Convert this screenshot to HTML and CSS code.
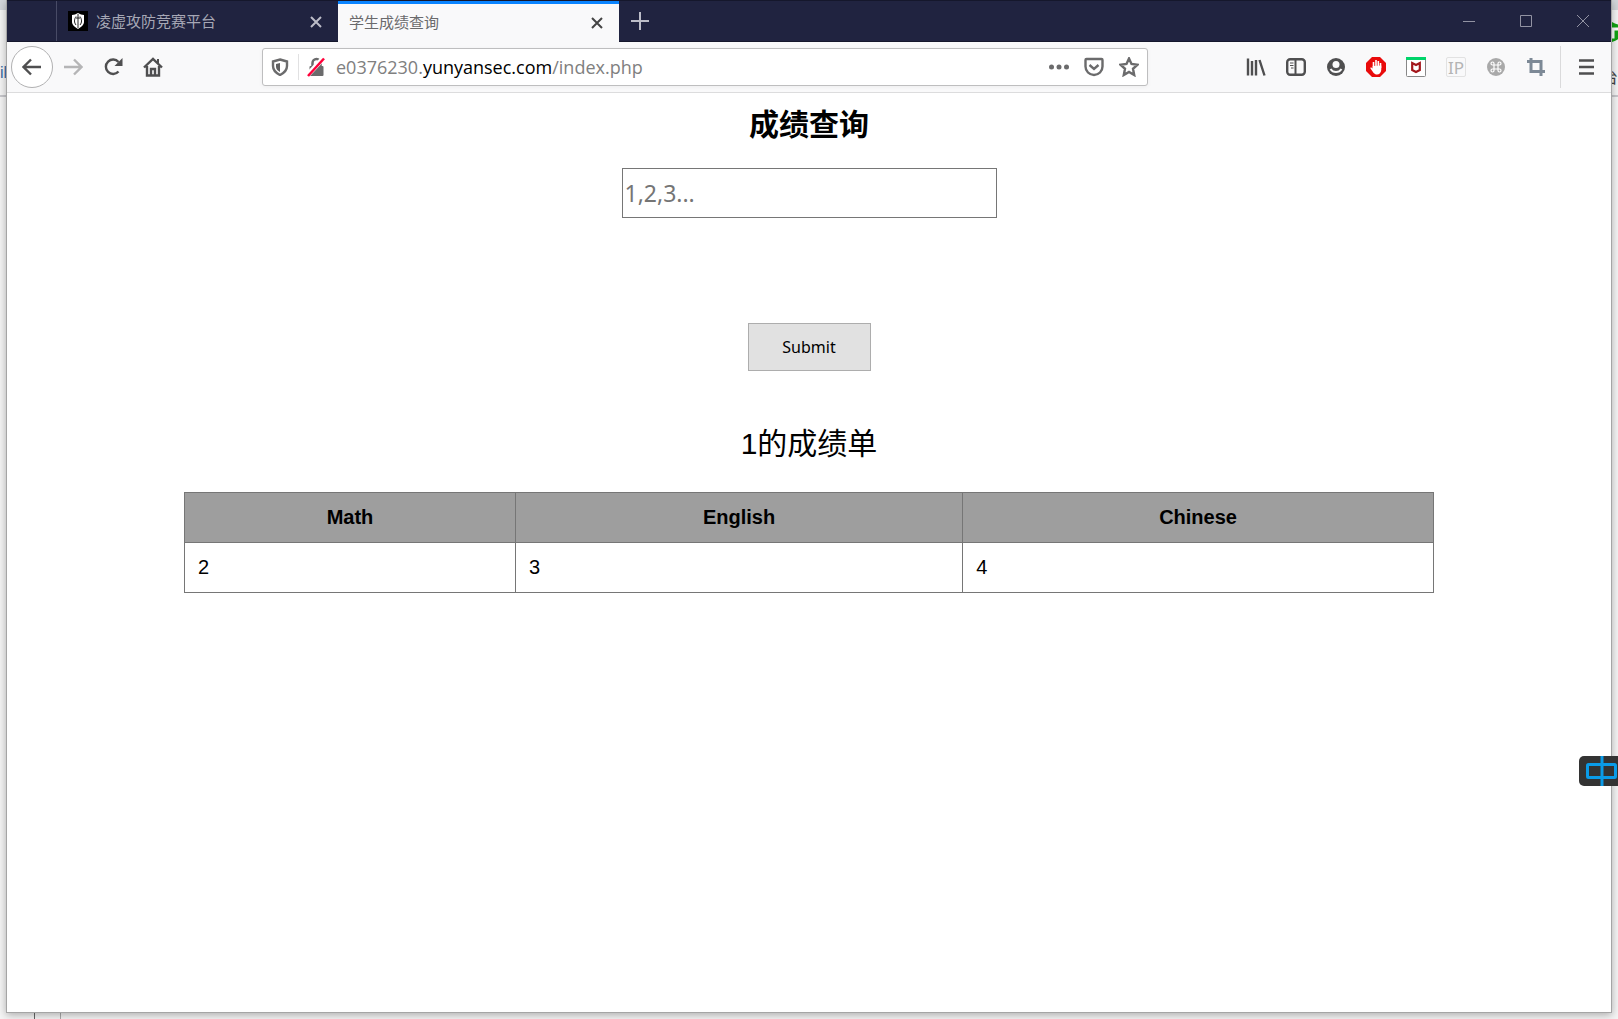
FILE: index.html
```html
<!DOCTYPE html>
<html lang="zh-CN">
<head>
  <meta charset="UTF-8">
  <meta name="viewport" content="width=device-width, initial-scale=1.0">
  <title>学生成绩查询</title>
  <link rel="stylesheet" href="styles.css">
</head>
<body>

<!-- window lying behind the browser, only its edges show -->
<div class="backdrop">
  <div class="back-tabs"></div>
  <div class="back-bar">
    <span class="back-left">il</span>
    <span class="back-right">台</span>
  </div>
  <svg class="back-shield" viewBox="0 0 20 20"><path d="M10 0C7 2 4 3 0 3v8c0 4 4 7 10 9 6-2 10-5 10-9V3c-4 0-7-1-10-3z" fill="#12a312"/><path d="M5 7h11M11 7v8H8" fill="none" stroke="#fff" stroke-width="3"/></svg>
  <div class="back-foot"></div>
</div>

<div class="window">
  <header class="titlebar">
    <div class="tab">
      <svg class="favicon" viewBox="0 0 20 20"><path d="M0 0h20v20H0z" fill="#000"/><path d="M10 2c2 1 4 2 6 2v7c0 3-3 5-6 7-3-2-6-4-6-7V4c2 0 4-1 6-2z" fill="#fff"/><path d="M10 3v14M8 5.500c-2 3-2 6 0 8.500M12 5.500c2 3 2 6 0 8.500M8 7h4" fill="none" stroke="#222" stroke-width="1"/></svg>
      <span class="tab-title">凌虚攻防竞赛平台</span>
      <button class="tab-close" aria-label="关闭"><svg viewBox="0 0 14 14"><path d="M2 2l10 10M12 2L2 12"/></svg></button>
    </div>
    <div class="tab active">
      <span class="tab-title">学生成绩查询</span>
      <button class="tab-close" aria-label="关闭"><svg viewBox="0 0 14 14"><path d="M2 2l10 10M12 2L2 12"/></svg></button>
    </div>
    <button class="new-tab" aria-label="新标签页"><svg viewBox="0 0 18 18"><path d="M9 0v18M0 9h18"/></svg></button>
    <div class="controls">
      <button aria-label="最小化"><svg viewBox="0 0 14 14"><path d="M1 7.500h12"/></svg></button>
      <button aria-label="最大化"><svg viewBox="0 0 14 14"><path d="M1.500 1.500h11v11h-11z"/></svg></button>
      <button aria-label="关闭窗口"><svg viewBox="0 0 14 14"><path d="M1 1l12 12M13 1L1 13"/></svg></button>
    </div>
  </header>

  <nav class="toolbar">
    <button class="back" aria-label="后退"><svg viewBox="0 0 20 20"><path d="M19 10H2M9 2.500L1.500 10 9 17.500"/></svg></button>
    <button class="forward" aria-label="前进"><svg viewBox="0 0 20 20"><path d="M1 10h17M11 2.500l7.500 7.500-7.500 7.500"/></svg></button>
    <button aria-label="刷新"><svg viewBox="0 0 20 20"><path d="M15.500 14.500A7.200 7.200 0 1 1 15.500 5"/><path d="M19.500 1v8h-8z" fill="#4f4f50" stroke="none"/></svg></button>
    <button aria-label="主页"><svg viewBox="0 0 20 20"><path d="M1 10.500l9-8.500 9 8.500M4 9v9.500h12V9"/><path d="M8 18v-6h4v6"/><path d="M14 2h2v4h-2z" stroke="none" fill="#4f4f50"/></svg></button>

    <div class="urlbar">
      <svg class="shield" viewBox="0 0 18 18"><path d="M9 1.500l7 2V8c0 4-3 7-7 9-4-2-7-5-7-9V3.500z"/><path d="M9 5l-4 1v3c0 2 2 4 4 5z" fill="#5f5f60" stroke="none"/></svg>
      <svg class="lock" viewBox="0 0 20 20"><path d="M6 9V6a4 4 0 0 1 8 0v3" fill="none" stroke="#6b6b6c" stroke-width="2.500"/><rect x="3" y="9" width="14" height="10" rx="1" fill="#6b6b6c" stroke="none"/><path d="M1 18L17 1" stroke="#fff" stroke-width="5"/><path d="M1.500 19L17.500 1.500" stroke="#ff0039" stroke-width="2.500"/></svg>
      <a class="url" href="#">e0376230.<b>yunyansec.com</b>/index.php</a>
      <button aria-label="页面操作"><svg viewBox="0 0 20 20"><g fill="#6b6b6c" stroke="none"><circle cx="2.500" cy="10" r="2.500"/><circle cx="10" cy="10" r="2.500"/><circle cx="17.500" cy="10" r="2.500"/></g></svg></button>
      <button aria-label="Pocket"><svg viewBox="0 0 20 20"><path d="M2.500 2h15q1 0 1 1v6.500a8.500 8.500 0 0 1-17 0V3q0-1 1-1z"/><path d="M5.500 8l4.500 4 4.500-4"/></svg></button>
      <button aria-label="书签"><svg viewBox="0 0 20 20"><path d="M10 1.500l2.500 5.500 6 .7-4.500 4.100 1.200 6.200L10 15l-5.200 3L6 11.800 1.500 7.700l6-.7z"/></svg></button>
    </div>

    <button aria-label="书库"><svg viewBox="0 0 20 20"><path d="M2 1.500v17M6 4v14.500M10 3v15.500M13.500 3l5 15.500"/></svg></button>
    <button aria-label="侧栏"><svg viewBox="0 0 20 20"><rect x="1.200" y="2.200" width="17.600" height="15.600" rx="3"/><path d="M9.500 2v16" stroke-width="2"/><path d="M4 6h3.500M4 8.500h3.500M5 11h2.500" stroke-width="1"/></svg></button>
    <button aria-label="账户"><svg viewBox="0 0 20 20"><circle cx="10" cy="10" r="9" fill="#4f4f50" stroke="none"/><circle cx="10" cy="7.500" r="3.500" fill="#f9f9fa" stroke="none"/><path d="M4.500 12a6.500 6.500 0 0 0 11 0" stroke="#f9f9fa" stroke-width="2"/></svg></button>
    <button aria-label="广告拦截"><svg viewBox="0 0 20 20"><path d="M6 0h8l6 6v8l-6 6H6l-6-6V6z" fill="#e90b0b" stroke="none"/><path d="M7.500 11V5M10 10V3M12.300 10V4M14.500 11V6" stroke="#fff" stroke-width="1.600"/><path d="M6.700 9l8.600-.5v4c0 3-2 5-4.300 5S7.500 16 4.500 11.500c-.5-1 .8-1.500 2.200 0z" fill="#fff" stroke="none"/></svg></button>
    <button aria-label="McAfee"><svg viewBox="0 0 20 20"><rect x=".5" y=".5" width="19" height="19" rx="1" fill="#fff" stroke="#888" stroke-width="1"/><path d="M0 0h20v3H0z" fill="#00d46a" stroke="none"/><path d="M6.200 6v7l3.800 2 3.800-2V6L10 8z" stroke="#a3151a" stroke-width="2.200"/></svg></button>
    <button class="ip" aria-label="IP">IP</button>
    <button aria-label="命令"><svg viewBox="0 0 20 20"><circle cx="10" cy="10" r="9" fill="#a9a9a9" stroke="none"/><path d="M8 8h4v4H8zM8 8H6.500A1.500 1.500 0 1 1 8 6.500zM12 8V6.500A1.500 1.500 0 1 1 13.500 8zM12 12h1.500a1.500 1.500 0 1 1-1.500 1.500zM8 12v1.500A1.500 1.500 0 1 1 6.500 12z" stroke="#fff" stroke-width="1.200"/></svg></button>
    <button class="crop" aria-label="截图"><svg viewBox="0 0 20 20"><path d="M1 4.500h14V19M5 1v13.500h14"/></svg></button>
    <button class="menu" aria-label="菜单"><svg viewBox="0 0 20 20"><path d="M3 3.500h15M3 10h15M3 16.500h15"/></svg></button>
  </nav>

  <main>
    <h1>成绩查询</h1>
    <form>
      <input type="text" name="id" placeholder="1,2,3..." aria-label="成绩查询">
      <button type="submit">Submit</button>
    </form>
    <p class="result-title">1的成绩单</p>
    <table>
      <thead>
        <tr><th class="math">Math</th><th class="english">English</th><th class="chinese">Chinese</th></tr>
      </thead>
      <tbody>
        <tr><td>2</td><td>3</td><td>4</td></tr>
      </tbody>
    </table>
  </main>
</div>

<div class="ime">
  <svg viewBox="0 0 32 30"><rect x="2.500" y="8.500" width="28" height="13" rx="1"/><path d="M17 0v30"/></svg>
</div>

</body>
</html>
```
FILE: styles.css
```css
* {
  box-sizing: border-box;
}

body {
  margin: 0;
  min-height: 100vh;
  display: flex;
  flex-direction: column;
  position: relative;
  overflow: hidden;
  background: #f5f5f5;
  font-family: "Liberation Sans", "Noto Sans CJK SC", sans-serif;
}

button {
  padding: 0;
  border: none;
  background: none;
  display: flex;
  align-items: center;
  justify-content: center;
  flex-shrink: 0;
}

svg {
  display: block;
  flex-shrink: 0;
}

/* window behind */
.backdrop {
  position: absolute;
  inset: 0;
  overflow: hidden;
}

.back-tabs {
  height: 10px;
  background: #d3d6da;
}

.back-bar {
  height: 87px;
  padding-top: 54px;
  border-bottom: 2px solid #c8c8cc;
  display: flex;
  justify-content: space-between;
  font-size: 16px;
  color: #3a6ea5;
}

.back-right {
  width: 6px;
  direction: rtl;
  color: #444;
}

.back-shield {
  position: absolute;
  right: -4px;
  top: 22px;
  width: 20px;
  height: 20px;
}

.back-foot {
  position: absolute;
  left: 34px;
  bottom: 0;
  width: 27px;
  height: 7px;
  border-left: 1px solid #666;
  border-right: 1px solid #aaa;
}

.window {
  flex: 1;
  display: flex;
  flex-direction: column;
  position: relative;
  margin: 0 6px 6px;
  border: 1px solid #a5a5a5;
  border-top: none;
  background: #fff;
  box-shadow: 0 2px 8px rgba(0, 0, 0, 0.3);
}

/* tabs */
.titlebar {
  height: 42px;
  padding-left: 49px;
  display: flex;
  background: #202340;
  border-top: 1px solid #15172c;
  border-bottom: 1px solid #15172c;
}

.tab {
  width: 282px;
  height: 40px;
  padding: 0 15px 2px 11px;
  display: flex;
  align-items: center;
  border-left: 1px solid #484b66;
  color: #a6a7b5;
  font-size: 15px;
}

.tab.active {
  width: 281px;
  height: 41px;
  padding-bottom: 4px;
  background: #f9f9fa;
  border-left: none;
  border-top: 3px solid #0a84ff;
  color: #6a6a6c;
}

.favicon {
  width: 20px;
  height: 20px;
  margin: 2px 8px 0 0;
}

.tab-title {
  flex: 1;
}

.tab-close {
  margin-top: 3px;
}

.tab-close svg {
  width: 14px;
  height: 14px;
}

.tab-close svg,
.new-tab svg {
  fill: none;
  stroke: #bcbdc8;
  stroke-width: 2;
}

.tab.active .tab-close svg {
  stroke: #444;
}

.new-tab {
  width: 42px;
}

.new-tab svg {
  width: 18px;
  height: 18px;
}

.controls {
  margin-left: auto;
  display: flex;
}

.controls button {
  width: 57px;
}

.controls svg {
  width: 14px;
  height: 14px;
  fill: none;
  stroke: #9293a3;
  stroke-width: 1;
}

/* navigation bar */
.toolbar {
  height: 51px;
  padding-left: 4px;
  display: flex;
  align-items: center;
  background: #f9f9fa;
  border-bottom: 1px solid #dcdcdd;
}

.toolbar button {
  width: 40px;
  height: 40px;
}

.toolbar svg {
  width: 20px;
  height: 20px;
  fill: none;
  stroke: #4f4f50;
  stroke-width: 2.4;
}

.toolbar .back {
  width: 42px;
  height: 42px;
  border: 1px solid #b1b1b2;
  border-radius: 50%;
  background: #fff;
}

.toolbar .forward svg {
  stroke: #b5b5b6;
}

.urlbar {
  flex: 1;
  height: 38px;
  margin: 0 88px 0 89px;
  padding: 0 1px 0 8px;
  display: flex;
  align-items: center;
  background: #fff;
  border: 1px solid #bebebf;
  border-radius: 3px;
  box-shadow: 0 1px 4px rgba(0, 0, 0, 0.05);
}

.urlbar button {
  width: 35px;
  height: 36px;
}

.toolbar .urlbar svg {
  stroke: #6b6b6c;
}

.toolbar .urlbar .shield {
  width: 18px;
  height: 18px;
}

.toolbar .urlbar .lock {
  width: 36px;
  height: 26px;
  margin: 0 2px 0 9px;
  padding: 3px 7px;
  border-left: 1px solid #e1e1e2;
}

.url {
  flex: 1;
  font-family: "Open Sans", "Noto Sans", sans-serif;
  font-size: 18px;
  color: #808080;
  text-decoration: none;
}

.url b {
  font-weight: normal;
  color: #000;
}

.toolbar .ip {
  width: 20px;
  height: 20px;
  margin: 0 10px;
  border: 1px solid #e2e2e2;
  border-radius: 2px;
  font: 17px "Noto Sans", sans-serif;
  color: #b4b4b4;
}

.toolbar .crop svg {
  stroke: #7d8996;
  stroke-width: 3;
}

.toolbar .menu {
  width: 51px;
  height: 42px;
  margin-left: 4px;
  border-left: 1px solid #dadadb;
}

/* page */
main {
  padding: 0 177px;
  display: flex;
  flex-direction: column;
  align-items: center;
}

h1 {
  margin: 10px 0 21px;
  font-size: 30px;
  line-height: 44px;
}

form {
  display: flex;
  flex-direction: column;
  align-items: center;
  gap: 105px;
}

form input {
  width: 375px;
  height: 50px;
  padding: 0 2px;
  border: 1px solid #767676;
  font: 23px "Noto Sans", sans-serif;
}

form input::placeholder {
  color: #757575;
}

form button {
  width: 123px;
  height: 48px;
  background: #e1e1e1;
  border: 1px solid #adadad;
  font: 16px "Noto Sans", sans-serif;
  color: #000;
}

.result-title {
  margin: 51px 0 26px;
  font-size: 30px;
  line-height: 44px;
}

table {
  width: 100%;
  table-layout: fixed;
  border-collapse: collapse;
  font-size: 20px;
  line-height: 25px;
}

th,
td {
  padding: 12px 13px;
  border: 1px solid #767676;
  text-align: left;
}

th {
  background: #9e9e9e;
  text-align: center;
}

.math {
  width: 26.5%;
}

.english {
  width: 35.8%;
}

.chinese {
  width: 37.7%;
}

/* input method badge */
.ime {
  position: absolute;
  right: 0;
  top: 756px;
  width: 39px;
  height: 30px;
  padding-left: 6px;
  background: #333;
  border-radius: 5px 0 0 5px;
}

.ime svg {
  width: 32px;
  height: 30px;
  fill: none;
  stroke: #0a9be8;
  stroke-width: 3;
}
```
